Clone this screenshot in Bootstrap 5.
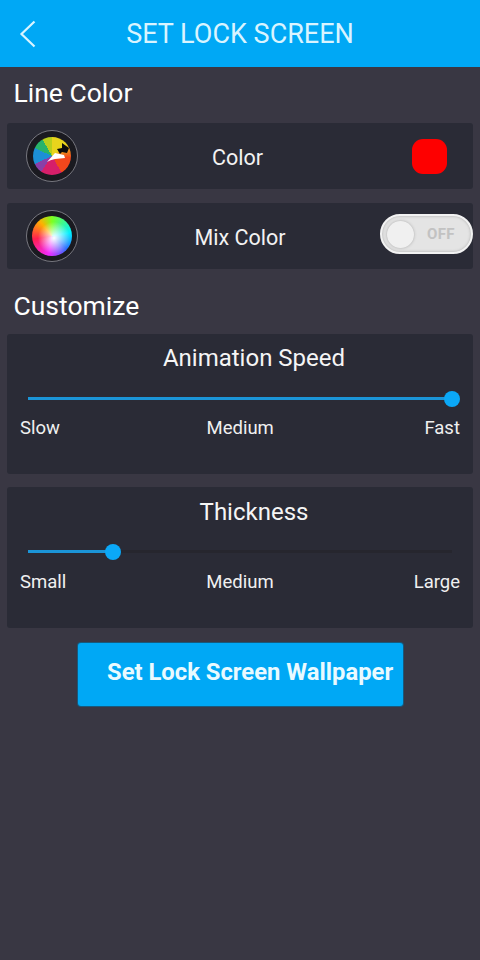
<!DOCTYPE html>
<html lang="en"><head><meta charset="utf-8">
<link href="https://cdn.jsdelivr.net/npm/bootstrap@5.3.0/dist/css/bootstrap.min.css" rel="stylesheet">
<style>
html,body{height:100%}
body{background:#393743;font-family:Roboto,"Liberation Sans",sans-serif;color:#fff;width:480px;height:960px;overflow:hidden}
.topbar{height:67px;background:#00a8f5;padding-left:19px}
.topbar-title{font-size:27px;color:#d9f4ff;left:0;right:0;top:0;height:67px;line-height:68px;text-align:center;position:absolute;margin:0;font-weight:400}
.sect{font-size:26.5px;line-height:30px;margin:0;font-weight:400;padding-left:13.5px}
.sect-a{padding-top:11px;height:56px}
.sect-b{padding-top:22px;height:65px}
.panel{background:#2a2b36;margin:0 7px;border-radius:3px}
.rowp{height:66px;padding:0 26px 0 19px;position:relative}
.rowp+.rowp{margin-top:14px}
.rowlabel{position:absolute;left:0;right:0;text-align:center;font-size:21.5px;line-height:26px;top:22px;color:#f2f2f2}
.shift{padding-right:5px}
.ring{width:52px;height:52px;border-radius:50%;border:1.5px solid #77777f;background:#1a1a20;padding:5.5px}
.wheel1{width:38px;height:38px;border-radius:50%;background:conic-gradient(#e8d41c 0 50deg,#f2471c 95deg 150deg,#d61f6a 150deg 215deg,#8a3fa8 215deg 245deg,#1c8fd6 245deg 295deg,#28b36a 295deg 330deg,#b8cf1c 330deg 360deg);position:relative}
.wheel2{width:40px;height:40px;margin:-1px;border-radius:50%;background:radial-gradient(circle at 55% 55%,#fff 0,rgba(255,255,255,0) 52%),conic-gradient(#7dff20,#00f0ff 80deg,#2a70ff 130deg,#f02bff 190deg,#ff1f50 260deg,#ffb000 320deg,#7dff20)}
.swatch{width:35px;height:35px;border-radius:11px;background:#fe0000}
.switchy{width:93px;height:40px;border-radius:20px;background:#e4e4e4;border:2px solid #f2f2f2;box-shadow:inset 0 0 3px #aaa;position:absolute;right:0;top:11px;padding:0 0 0 5px}
.knob{width:27px;height:27px;border-radius:50%;background:#f0f0f0;box-shadow:0 0 3px #aaa}
.offtxt{font-size:15px;font-weight:700;color:#c2c2c2;margin-left:13px;letter-spacing:.3px}
.sliderbox{position:relative;height:140px}
.sliderbox+.sliderbox{margin-top:13px;height:141px}
.sl-title{font-size:24px;line-height:28px;text-align:center;padding-top:10px;padding-left:28px;margin:0;font-weight:400;color:#f5f5f5}
.sliderbox+.sliderbox .sl-title{padding-top:11px}
.sliderbox+.sliderbox .track{margin-top:24px}
.sliderbox+.sliderbox .sl-labels{margin-top:18px}
.track{position:relative;height:3px;background:#26262e;margin:25px 21px 0 21px}
.fill{position:absolute;left:0;top:0;height:3px;background:#1b95d8}
.thumb{position:absolute;top:-6.5px;width:16px;height:16px;border-radius:50%;background:#0ba8f7;margin-left:-8px}
.sl-labels{font-size:18.5px;line-height:22px;padding:0 13px;margin-top:17px;color:#f0f0f0}
.midnudge{margin-right:4px}
.actbtn{background:#00a8f5;color:#e9faff;width:325px;height:63px;border:0;box-shadow:0 0 0 1px #17597c;border-radius:3px;font-size:23.8px;font-weight:700;padding:0 0 4px 29px;text-align:left;margin:15px 0 0 78px;display:block;white-space:nowrap}
</style></head><body>
<header class="topbar d-flex align-items-center position-relative">
<svg width="18" height="28" viewBox="0 0 18 28" fill="none" stroke="#d9f4ff" stroke-width="2.2"><path d="M15.5 1.5 2.5 14 15.5 26.5"/></svg>
<h1 class="topbar-title">SET LOCK SCREEN</h1>
</header>
<h2 class="sect sect-a">Line Color</h2>
<div class="panel rowp d-flex align-items-center justify-content-between">
<div class="ring"><div class="wheel1"><svg class="position-absolute top-0 start-0" width="38" height="38" viewBox="0 0 38 38"><path d="M14 25 22 16 31 18 32 21 22 22 Q17 23 14 25Z" fill="#fff"/><path d="M24 12 29 11 29 6 36 11 34 16 29 15 27 17Z" fill="#0c0c0c"/></svg></div></div>
<span class="rowlabel shift">Color</span>
<div class="swatch"></div>
</div>
<div class="panel rowp d-flex align-items-center">
<div class="ring"><div class="wheel2"></div></div>
<span class="rowlabel">Mix Color</span>
<div class="switchy d-flex align-items-center"><div class="knob"></div><span class="offtxt">OFF</span></div>
</div>
<h2 class="sect sect-b">Customize</h2>
<section class="panel sliderbox">
<h3 class="sl-title">Animation Speed</h3>
<div class="track"><div class="fill" style="width:100%"></div><div class="thumb" style="left:100%"></div></div>
<div class="sl-labels d-flex justify-content-between"><span>Slow</span><span class="midnudge">Medium</span><span>Fast</span></div>
</section>
<section class="panel sliderbox">
<h3 class="sl-title">Thickness</h3>
<div class="track"><div class="fill" style="width:20%"></div><div class="thumb" style="left:20%"></div></div>
<div class="sl-labels d-flex justify-content-between"><span>Small</span><span>Medium</span><span>Large</span></div>
</section>
<button type="button" class="btn actbtn">Set Lock Screen Wallpaper</button>
<script src="https://cdn.jsdelivr.net/npm/bootstrap@5.3.0/dist/js/bootstrap.bundle.min.js"></script>
</body></html>
